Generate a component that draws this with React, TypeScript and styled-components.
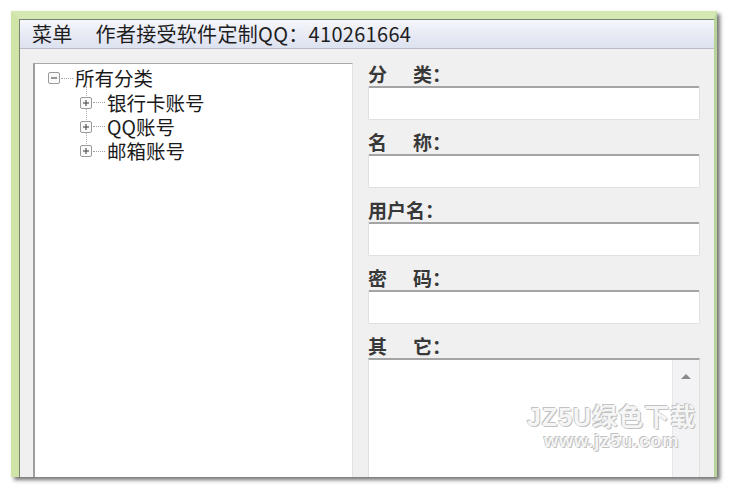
import React from 'react';
import styled, { createGlobalStyle } from 'styled-components';

const GlobalStyle = createGlobalStyle`
  html, body {
    margin: 0;
    padding: 0;
    background: #ffffff;
  }
  body {
    font-family: "Noto Sans CJK SC", "Noto Sans", sans-serif;
  }
`;

const categories = ['银行卡账号', 'QQ账号', '邮箱账号'];

const fields = [
  { head: '分', tail: '类：', spaced: true },
  { head: '名', tail: '称：', spaced: true },
  { head: '用户名：', tail: '', spaced: false },
  { head: '密', tail: '码：', spaced: true },
];

// small +/- box used by the tree
const Expander: React.FC<{ open?: boolean }> = ({ open }) => (
  <svg width="12" height="12" viewBox="0 0 12 12">
    <rect x="0.5" y="0.5" width="11" height="11" rx="1.5" fill="#fafafa" stroke="#9a9a9a" />
    <line x1="3" y1="6" x2="9" y2="6" stroke="#555" strokeWidth="1.2" />
    {!open && <line x1="6" y1="3" x2="6" y2="9" stroke="#555" strokeWidth="1.2" />}
  </svg>
);

const App: React.FC = () => {
  return (
    <Page>
      <GlobalStyle />
      <Window>
        <MenuBar>
          <MenuItem>菜单</MenuItem>
          <MenuItem>作者接受软件定制QQ：410261664</MenuItem>
        </MenuBar>

        <Content>
          <TreePanel>
            <TreeRow>
              <Expander open />
              <Dots />
              <TreeText>所有分类</TreeText>
            </TreeRow>
            <Children>
              {categories.map(name => (
                <TreeRow key={name}>
                  <Expander />
                  <Dots />
                  <TreeText>{name}</TreeText>
                </TreeRow>
              ))}
            </Children>
          </TreePanel>

          <FormColumn>
            {fields.map(f => (
              <Field key={f.head}>
                <FieldLabel>
                  {f.head}
                  {f.spaced && <LabelGap />}
                  {f.tail}
                </FieldLabel>
                <TextBox />
              </Field>
            ))}
            <Field>
              <FieldLabel>
                其<LabelGap />它：
              </FieldLabel>
              <MemoBox>
                <MemoArea />
                <ScrollBar>
                  <ScrollArrow />
                </ScrollBar>
              </MemoBox>
            </Field>
          </FormColumn>
        </Content>

        <Watermark>
          <WatermarkTitle>JZ5U绿色下载</WatermarkTitle>
          <WatermarkUrl>www.jz5u.com</WatermarkUrl>
        </Watermark>
      </Window>
    </Page>
  );
};

const Page = styled.div`
  width: 731px;
  height: 488px;
  padding: 11px 0 0 11px;
  box-sizing: border-box;
  overflow: hidden;
`;

const Window = styled.div`
  position: relative;
  width: 706px;
  height: 466px;
  box-sizing: border-box;
  display: flex;
  flex-direction: column;
  background: #f0f0f0;
  border-top: 8px solid #d4e8b4;
  border-left: 8px solid #cfe4a6;
  border-right: 3px solid #b8d49a;
  box-shadow: 3px 3px 4px rgba(0, 0, 0, 0.55), inset 1px 1px 0 #7c8272;
  overflow: hidden;
`;

const MenuBar = styled.div`
  height: 28px;
  flex-shrink: 0;
  display: flex;
  align-items: center;
  gap: 23px;
  padding-left: 12px;
  margin-left: 1px;
  margin-top: 1px;
  background: linear-gradient(to bottom, #f6f7fb 0%, #e6e9f4 60%, #dde2f0 100%);
  border-bottom: 1px solid #b9bcc4;
`;

const MenuItem = styled.span`
  font-size: 20px;
  line-height: 26px;
  letter-spacing: 0.3px;
  color: #1e1e1e;
  white-space: nowrap;
`;

const Content = styled.div`
  flex: 1;
  display: flex;
  gap: 15px;
  padding: 14px 0 0 13px;
  margin-left: 1px;
  min-height: 0;
`;

const TreePanel = styled.div`
  width: 320px;
  flex-shrink: 0;
  box-sizing: border-box;
  background: #ffffff;
  border-top: 1px solid #a8a8a8;
  border-left: 2px solid #a0a0a0;
  border-right: 1px solid #e2e2e2;
  padding: 2px 0 0 13px;
`;

const Children = styled.div`
  position: relative;
  display: flex;
  flex-direction: column;
  padding-left: 32px;

  /* dotted connector running through the child expanders */
  &::before {
    content: '';
    position: absolute;
    left: 38px;
    top: -4px;
    height: 60px;
    border-left: 1px dotted #b4b4b4;
  }
`;

const TreeRow = styled.div`
  position: relative;
  display: flex;
  align-items: center;
  height: 24.4px;
  & > svg {
    flex-shrink: 0;
    position: relative;
    z-index: 1;
  }
`;

const Dots = styled.span`
  width: 12px;
  border-top: 1px dotted #a0a0a0;
  margin: 0 2px 0 1px;
`;

const TreeText = styled.div`
  font-size: 19.5px;
  line-height: 22px;
  height: 22px;
  color: #1a1a1a;
  white-space: nowrap;
`;

const FormColumn = styled.div`
  width: 332px;
  display: flex;
  flex-direction: column;
  gap: 10px;
  margin-top: -1px;
`;

const Field = styled.div`
  display: flex;
  flex-direction: column;
`;

const FieldLabel = styled.div`
  height: 24px;
  line-height: 22px;
  font-size: 19px;
  font-weight: 700;
  color: #383838;
  white-space: nowrap;
  display: flex;
  align-items: center;
`;

const LabelGap = styled.span`
  display: inline-block;
  width: 26px;
`;

const TextBox = styled.div`
  height: 34px;
  box-sizing: border-box;
  background: #ffffff;
  border: 1px solid #e0e0e0;
  border-top: 2px solid #a4a4a4;
  border-radius: 2px;
`;

const MemoBox = styled.div`
  height: 140px;
  display: flex;
  background: #ffffff;
  border: 1px solid #e0e0e0;
  border-top: 2px solid #a4a4a4;
`;

const MemoArea = styled.div`
  flex: 1;
`;

const ScrollBar = styled.div`
  width: 26px;
  background: #f3f3f5;
  border-left: 1px solid #e6e6e8;
  display: flex;
  justify-content: center;
  padding-top: 14px;
`;

const ScrollArrow = styled.span`
  width: 0;
  height: 0;
  border-left: 5px solid transparent;
  border-right: 5px solid transparent;
  border-bottom: 5px solid #8a8a8a;
`;

const Watermark = styled.div`
  position: absolute;
  left: 508px;
  top: 384px;
  display: flex;
  flex-direction: column;
  align-items: center;
  pointer-events: none;
`;

const WatermarkTitle = styled.span`
  font-family: "Liberation Sans", "Noto Sans CJK SC", sans-serif;
  font-size: 25px;
  line-height: 28px;
  font-weight: 700;
  color: rgba(255, 255, 255, 0.9);
  letter-spacing: 1px;
  text-shadow: 0 0 1px #b4b4b4, 1px 1px 0 #c4c4c4, -1px -1px 0 #c4c4c4;
`;

const WatermarkUrl = styled.span`
  font-family: "Liberation Sans", sans-serif;
  font-size: 18px;
  line-height: 20px;
  font-weight: 700;
  color: rgba(255, 255, 255, 0.9);
  letter-spacing: 1px;
  text-shadow: 0 0 1px #b4b4b4, 1px 1px 0 #c4c4c4, -1px -1px 0 #c4c4c4;
`;

export default App;
